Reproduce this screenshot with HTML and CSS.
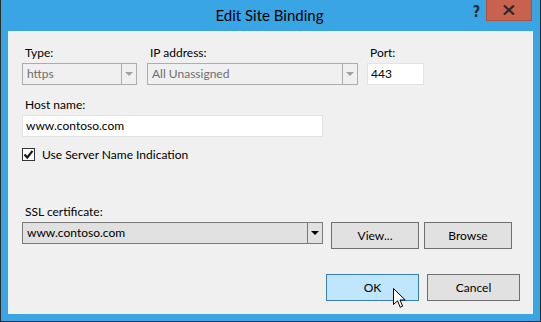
FILE: index.html
```html
<!DOCTYPE html>
<html>
<head>
<meta charset="utf-8">
<link rel="stylesheet" href="styles.css">
</head>
<body>
<div class="window">
  <div class="titlebar">
    <div class="title">Edit Site Binding</div>
    <div class="help">?</div>
    <div class="close">
      <svg width="12" height="10" viewBox="0 0 12 10"><path d="M1 0.5 L11 9.5 M11 0.5 L1 9.5" stroke="#2b2b2b" stroke-width="2.2"/></svg>
    </div>
  </div>
  <div class="content">
    <div class="row1">
      <div class="field f-type">
        <label class="lbl">Type:</label>
        <div class="combo disabled"><span class="val">https</span><span class="arrow"><i class="tri"></i></span></div>
      </div>
      <div class="field f-ip">
        <label class="lbl">IP address:</label>
        <div class="combo disabled"><span class="val">All Unassigned</span><span class="arrow"><i class="tri"></i></span></div>
      </div>
      <div class="field f-port">
        <label class="lbl">Port:</label>
        <div class="textbox">443</div>
      </div>
    </div>
    <div class="field f-host">
      <label class="lbl">Host name:</label>
      <div class="textbox wide">www.contoso.com</div>
    </div>
    <div class="check">
      <span class="box"><svg width="11" height="11" viewBox="0 0 11 11"><path d="M1.5 5.5 L4.3 8.5 L9.5 1.8" fill="none" stroke="#1a1a1a" stroke-width="2.2"/></svg></span>
      <span>Use Server Name Indication</span>
    </div>
    <div class="field f-ssl">
      <label class="lbl">SSL certificate:</label>
      <div class="ssl-row">
        <div class="combo active"><span class="val">www.contoso.com</span><span class="arrow"><i class="tri"></i></span></div>
        <button class="btn view">View...</button>
        <button class="btn browse">Browse</button>
      </div>
    </div>
    <div class="footer">
      <button class="btn ok">OK</button>
      <button class="btn cancel">Cancel</button>
    </div>
  </div>
  <svg class="cursor" width="13" height="21" viewBox="0 0 13 21"><path d="M0.5 0.5 L0.5 16.5 L4.5 12.8 L7.2 19.2 L9.6 18.2 L7 12 L12.2 12 Z" fill="#fff" stroke="#000" stroke-width="1"/></svg>
</div>
</body>
</html>
```

FILE: styles.css
```css
* { box-sizing: border-box; }
html, body { margin: 0; padding: 0; }
body {
  width: 541px; height: 322px; overflow: hidden;
  font-family: Lato, "Noto Sans", sans-serif;
  font-size: 12px; color: #000;
}
.window {
  position: relative;
  width: 541px; height: 322px;
  background: #3aa5e4;
  border: 1px solid #2b2b2b;
  border-top: none;
  display: flex; flex-direction: column;
}
.titlebar {
  position: relative;
  height: 31px; flex: none;
}
.title {
  text-align: center;
  font-size: 15px;
  line-height: 30px;
  color: #000;
  padding-right: 2px;
}
.help {
  position: absolute; left: 471px; top: 3px;
  font-size: 15px; font-weight: bold; color: #2b2b2b;
  font-family: "DejaVu Sans", sans-serif;
  transform: scaleX(0.85);
}
.close {
  position: absolute; left: 485px; top: 0;
  width: 46px; height: 21px;
  background: #c9614f;
  border: 1px solid #b0503f; border-top: none;
  display: flex; align-items: center; justify-content: center;
}
.content {
  background: #f0f0f0;
  margin: 0 7px 7px 7px;
  flex: 1;
  padding: 14px 0 0 14px;
  display: flex; flex-direction: column;
}
.row1 { display: flex; }
.field { display: flex; flex-direction: column; }
.lbl { padding-left: 3px; height: 18px; line-height: 16px; }
.f-type { width: 115px; margin-right: 10px; }
.f-ip { width: 211px; margin-right: 9px; }
.f-port { width: 57px; }
.combo {
  height: 22px; display: flex;
  border: 1px solid #adadad;
}
.combo .val { flex: 1; padding-left: 4px; line-height: 20px; }
.combo .arrow {
  width: 15px; border-left: 1px solid #adadad;
  display: flex; align-items: center; justify-content: center;
}
.tri {
  width: 0; height: 0;
  border-left: 4px solid transparent; border-right: 4px solid transparent;
  border-top: 4px solid #a0a0a0;
}
.combo.disabled { color: #6d6d6d; background: #f0f0f0; }
.combo.active { background: #e1e1e1; border-color: #7a7a7a; width: 301px; }
.combo.active .arrow { border-left-color: #7a7a7a; }
.combo.active .tri { border-top-color: #000; }
.textbox {
  height: 22px; background: #fff;
  border: 1px solid #e3e3e3;
  padding-left: 3px; line-height: 20px;
}
.f-host { margin-top: 12px; }
.textbox.wide { width: 301px; }
.check {
  margin-top: 11px; display: flex; align-items: center; height: 13px;
}
.box {
  width: 13px; height: 13px; border: 1px solid #333; background: #fff;
  display: flex; align-items: center; justify-content: center;
  margin-right: 7px;
}
.f-ssl { margin-top: 43px; }
.ssl-row { display: flex; align-items: flex-start; }
.btn {
  font-family: inherit; font-size: 12px; color: #000;
  height: 27px; padding: 0;
  background: #e1e1e1; border: 1px solid #707070; border-radius: 0;
}
.view { width: 88px; margin-left: 8px; }
.browse { width: 88px; margin-left: 5px; }
.footer {
  display: flex; justify-content: flex-end;
  margin-top: 25px; padding-right: 13px;
}
.ok { width: 93px; background: #bee6fd; border-color: #3c7fb1; margin-right: 8px; }
.cancel { width: 93px; }
.cursor { position: absolute; left: 392px; top: 288px; }
```
